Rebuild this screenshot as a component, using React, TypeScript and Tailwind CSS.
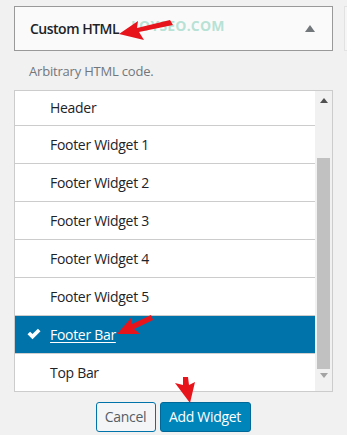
const areas = [
  "Header",
  "Footer Widget 1",
  "Footer Widget 2",
  "Footer Widget 3",
  "Footer Widget 4",
  "Footer Widget 5",
  "Footer Bar",
  "Top Bar",
];

function Arrow({ d }: { d: string }) {
  return <path d={d} fill="#e8141c" />;
}

export default function App() {
  return (
    <div className="relative w-[347px] h-[435px] overflow-hidden bg-[#f1f1f1] font-['Open_Sans',sans-serif] text-[#1d2327]">
      <div className="absolute left-[344px] top-[6px] h-[45px] w-[10px] border border-[#e2e2e2] bg-[#f6f6f6]" />

      <div className="pt-[6px] px-[14px]">
        <div className="h-[45px] border border-[#999] bg-[#fafafa] flex items-center justify-between pl-[15px] pr-[17px]">
          <span className="text-[14px] font-semibold tracking-[-0.5px]">Custom HTML</span>
          <svg width="10" height="7" viewBox="0 0 10 7">
            <path d="M5 0L10 7H0z" fill="#72777c" />
          </svg>
        </div>

        <p className="mt-[11px] pl-[15px] text-[13px] text-[#72777c] tracking-[-0.2px]">Arbitrary HTML code.</p>

        <div className="mt-[8px] h-[302px] border border-[#ccc] bg-white flex">
          <ul className="flex-1">
            {areas.map((name, i) => {
              const selected = name === "Footer Bar";
              const last = i === areas.length - 1;
              return (
                <li
                  key={name}
                  className={`flex items-center pl-[35px] text-[14px] tracking-[-0.3px] ${i === 0 ? "h-[35px]" : last ? "h-[37px]" : "h-[38px]"} ${last ? "" : "border-b border-[#ccc]"} ${selected ? "bg-[#0073aa] text-white border-[#cfcfcf]" : ""}`}
                >
                  {selected ? (
                    <>
                      <svg width="14" height="12" viewBox="0 0 14 12" className="-ml-[23px] mr-[9px]">
                        <path d="M0.5 6.3l2.6-2.6 2.4 2.4L10.9 0.7l2.6 2.6-8 8z" fill="#fff" />
                      </svg>
                      <span className="underline underline-offset-2">{name}</span>
                    </>
                  ) : (
                    name
                  )}
                </li>
              );
            })}
          </ul>
          <div className="w-[17px] bg-[#f1f1f1] flex flex-col items-center">
            <svg width="8" height="5" viewBox="0 0 8 5" className="mt-[7px]">
              <path d="M4 0L8 5H0z" fill="#505050" />
            </svg>
            <div className="mt-[55px] w-[13px] h-[211px] bg-[#c1c1c1]" />
            <svg width="8" height="5" viewBox="0 0 8 5" className="mt-[4px]">
              <path d="M0 0H8L4 5z" fill="#a3a3a3" />
            </svg>
          </div>
        </div>

        <div className="mt-[10px] flex justify-center gap-[4px] pr-[1px]">
          <button className="h-[30px] w-[60px] rounded-[3px] border border-[#0073aa] bg-[#f3f5f6] text-[14px] text-[#555d66] tracking-[-0.3px]">
            Cancel
          </button>
          <button className="h-[30px] w-[91px] rounded-[3px] border border-[#006799] bg-[#0085ba] text-[14px] text-white tracking-[-0.3px]">
            Add Widget
          </button>
        </div>
      </div>

      <span className="absolute left-[131px] top-[15px] text-[14px] font-bold tracking-[0.2px] text-[#a6dccb]/80">
        LOYSEO.COM
      </span>

      <svg className="absolute inset-0" width="347" height="435" viewBox="0 0 347 435">
        <Arrow d="M119 34L138 21L137 28L170 20L173 25L139 32L144 40Z" />
        <Arrow d="M117 334L131 318L132 324L151 315L153 320L134 329L140 334Z" />
        <Arrow d="M190 403L175 383L183 385L183 377L188 377L189 385L195 382Z" />
      </svg>
    </div>
  );
}
